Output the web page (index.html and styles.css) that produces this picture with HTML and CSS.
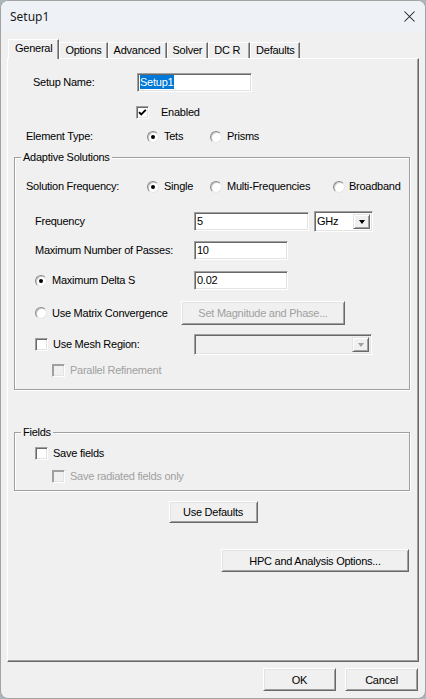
FILE: index.html
```html
<!DOCTYPE html>
<html lang="en">
<head>
    <meta charset="UTF-8">
    <meta name="viewport" content="width=device-width, initial-scale=1.0">
    <title>Setup1</title>
    <link rel="stylesheet" href="styles.css">
</head>
<body>
    <div class="window">
        <div class="titlebar">
            <span class="title">Setup1</span>
            <svg class="close" width="11" height="11" viewBox="0 0 11 11">
                <path d="M0.5 0.5 L10.5 10.5 M10.5 0.5 L0.5 10.5" stroke="#1c1c1c" stroke-width="1.05" fill="none"/>
            </svg>
        </div>

        <div class="content">
            <div class="tabs">
                <div class="tab active">General</div>
                <div class="tab">Options</div>
                <div class="tab">Advanced</div>
                <div class="tab">Solver</div>
                <div class="tab tab-dcr">DC R</div>
                <div class="tab">Defaults</div>
            </div>

            <div class="panel">
                <div class="row name-row">
                    <span>Setup Name:</span>
                    <div class="field name-field"><span class="selection">Setup1</span></div>
                </div>

                <div class="row enabled-row">
                    <span class="check checked">
                        <svg width="13" height="13" viewBox="0 0 13 13"><path d="M3 6.2 L5.2 8.5 L9.8 3.8" stroke="#000" stroke-width="1.9" fill="none"/></svg>
                    </span>
                    <span>Enabled</span>
                </div>

                <div class="row choice-row element-row">
                    <span>Element Type:</span>
                    <label class="option"><span class="radio on"></span>Tets</label>
                    <label class="option"><span class="radio"></span>Prisms</label>
                </div>

                <fieldset class="group adaptive">
                    <legend>Adaptive Solutions</legend>

                    <div class="row choice-row freq-choice">
                        <span>Solution Frequency:</span>
                        <label class="option"><span class="radio on"></span>Single</label>
                        <label class="option"><span class="radio"></span>Multi-Frequencies</label>
                        <label class="option broadband"><span class="radio"></span>Broadband</label>
                    </div>

                    <div class="row input-row freq-row">
                        <span>Frequency</span>
                        <div class="field freq-field">5</div>
                        <div class="field combo">
                            <span class="combo-text">GHz</span>
                            <span class="combo-btn"><span class="arrow"></span></span>
                        </div>
                    </div>

                    <div class="row input-row passes-row">
                        <span>Maximum Number of Passes:</span>
                        <div class="field short-field">10</div>
                    </div>

                    <div class="row input-row delta-row">
                        <label class="option"><span class="radio on"></span>Maximum Delta S</label>
                        <div class="field short-field">0.02</div>
                    </div>

                    <div class="row matrix-row">
                        <label class="option"><span class="radio"></span>Use Matrix Convergence</label>
                        <button class="btn magnitude-btn" disabled>Set Magnitude and Phase...</button>
                    </div>

                    <div class="row input-row mesh-row">
                        <label class="option"><span class="check"></span>Use Mesh Region:</label>
                        <div class="field combo disabled mesh-combo">
                            <span class="combo-text"></span>
                            <span class="combo-btn"><span class="arrow"></span></span>
                        </div>
                    </div>

                    <div class="row sub-row parallel-row">
                        <label class="option disabled"><span class="check"></span>Parallel Refinement</label>
                    </div>
                </fieldset>

                <fieldset class="group fields">
                    <legend>Fields</legend>

                    <div class="row save-row">
                        <label class="option"><span class="check"></span>Save fields</label>
                    </div>

                    <div class="row sub-row radiated-row">
                        <label class="option disabled"><span class="check"></span>Save radiated fields only</label>
                    </div>
                </fieldset>

                <div class="defaults-row">
                    <button class="btn defaults-btn">Use Defaults</button>
                </div>

                <div class="hpc-row">
                    <button class="btn hpc-btn">HPC and Analysis Options...</button>
                </div>
            </div>

            <div class="dialog-buttons">
                <button class="btn dialog-btn">OK</button>
                <button class="btn dialog-btn">Cancel</button>
            </div>
        </div>
    </div>
</body>
</html>
```

FILE: styles.css
```css
* {
    box-sizing: border-box;
}
html, body {
    margin: 0;
}
body {
    background-color: #aab6bb;
    font-family: "Liberation Sans", Arial, sans-serif;
    font-size: 11px;
    letter-spacing: -0.25px;
    color: #000;
}
.window {
    width: 426px;
    height: 699px;
    background-color: #f0f0f0;
    border: 1px solid #a3a3a3;
    border-radius: 8px;
    overflow: hidden;
}

/* title bar */
.titlebar {
    height: 31px;
    background-color: #eef2f6;
    display: flex;
    align-items: center;
    justify-content: space-between;
    padding: 0 10px 0 9px;
}
.title {
    font-family: "Noto Sans", "Open Sans", sans-serif;
    font-size: 12px;
    letter-spacing: 0;
    color: #1a1a1a;
}

.content {
    padding: 7px 6px 0 6px;
}

/* tabs */
.tabs {
    display: flex;
    align-items: flex-end;
    height: 19px;
    padding-left: 1px;
}
.tab {
    height: 16px;
    line-height: 15px;
    padding: 0 5px;
    border-top: 1px solid #fff;
    border-left: 1px solid #fff;
    border-right: 1px solid #696969;
    box-shadow: inset -1px 0 0 #a0a0a0;
}
.tab-dcr {
    padding-right: 9px;
}
.tab.active {
    height: 20px;
    line-height: 17px;
    margin-bottom: -1px;
    padding: 0 6px;
    background-color: #f0f0f0;
    position: relative;
    z-index: 1;
}

/* tab page */
.panel {
    height: 604px;
    border: 1px solid;
    border-color: #fff #696969 #696969 #fff;
    box-shadow: inset -1px -1px 0 #a0a0a0;
}

.row {
    display: flex;
    align-items: center;
    height: 13px;
    line-height: 13px;
    white-space: nowrap;
}
.name-row {
    display: grid;
    grid-template-columns: 104px 115px;
    height: 19px;
    margin-top: 14px;
    padding-left: 25px;
}
.enabled-row {
    margin-top: 14px;
    padding-left: 128px;
    gap: 12px;
}
.choice-row {
    display: grid;
    grid-template-columns: 121px 63px auto;
}
.element-row {
    margin-top: 11px;
    padding-left: 18px;
}

.option {
    display: flex;
    align-items: center;
    gap: 5px;
}
.option.disabled {
    color: #a0a0a0;
}

/* classic radio button */
.radio {
    width: 12px;
    height: 12px;
    flex: none;
    border-radius: 50%;
    background-color: #fff;
    border: 1px solid;
    border-color: #8a8a8a #e6e6e6 #e6e6e6 #8a8a8a;
    box-shadow: inset 1px 1px 0 #c8c8c8;
    display: flex;
    align-items: center;
    justify-content: center;
}
.radio.on::after {
    content: "";
    width: 4px;
    height: 4px;
    border-radius: 50%;
    background-color: #000;
}

/* classic check box */
.check {
    width: 13px;
    height: 13px;
    flex: none;
    background-color: #fff;
    border: 1px solid;
    border-color: #a0a0a0 #fff #fff #a0a0a0;
    box-shadow: inset 1px 1px 0 #696969, inset -1px -1px 0 #e3e3e3;
    position: relative;
}
.check svg {
    position: absolute;
    top: -1px;
    left: -1px;
}
.option.disabled .check {
    background-color: #f0f0f0;
    box-shadow: inset 1px 1px 0 #a0a0a0, inset -1px -1px 0 #e3e3e3;
}

/* sunken edit fields */
.field {
    height: 19px;
    line-height: 16px;
    padding: 0 2px;
    background-color: #fff;
    border: 1px solid;
    border-color: #a0a0a0 #fff #fff #a0a0a0;
    box-shadow: inset 1px 1px 0 #696969, inset -1px -1px 0 #e3e3e3;
}
.selection {
    display: inline-block;
    line-height: 14px;
    margin-top: 1px;
    padding-right: 1px;
    background-color: #0078d7;
    color: #fff;
}

/* group boxes */
.group {
    margin: 8px 8px 0 6px;
    padding: 0 0 12px;
    border: 1px solid #a0a0a0;
    box-shadow: inset 1px 1px 0 #fff, 1px 1px 0 #fff;
    min-width: 0;
}
.group legend {
    margin-left: 6px;
    padding: 0 2px;
    line-height: 13px;
    background-color: #f0f0f0;
}

.freq-choice {
    margin-top: 16px;
    padding-left: 11px;
    grid-template-columns: 121px 63px 123px auto;
}
.broadband {
    gap: 4px;
}

.input-row {
    display: grid;
    grid-template-columns: 159px auto auto;
    padding-left: 20px;
    height: 19px;
    justify-content: start;
}
.freq-row {
    margin-top: 18px;
    height: 21px;
}
.freq-field {
    width: 115px;
}
.short-field {
    width: 94px;
}
.passes-row {
    margin-top: 9px;
}
.delta-row {
    margin-top: 11px;
}

/* combo boxes */
.combo {
    display: flex;
    justify-content: space-between;
    height: 21px;
    margin-left: 5px;
    width: 59px;
    padding: 2px 2px 2px 2px;
    line-height: 15px;
}
.combo-btn {
    width: 17px;
    height: 15px;
    background-color: #f0f0f0;
    border: 1px solid;
    border-color: #e3e3e3 #696969 #696969 #e3e3e3;
    box-shadow: inset 1px 1px 0 #fff, inset -1px -1px 0 #a0a0a0;
    display: flex;
    align-items: center;
    justify-content: center;
}
.arrow {
    width: 0;
    height: 0;
    border-left: 3.5px solid transparent;
    border-right: 3.5px solid transparent;
    border-top: 4px solid #000;
    margin-top: 1px;
}
.combo.disabled {
    background-color: #f0f0f0;
}
.combo.disabled .arrow {
    border-top-color: #a0a0a0;
}
.mesh-combo {
    width: 178px;
    margin-left: 0;
}

/* push buttons */
.btn {
    font-family: inherit;
    font-size: 11px;
    letter-spacing: -0.25px;
    color: #000;
    background-color: #f0f0f0;
    border: 1px solid;
    border-color: #fff #696969 #696969 #fff;
    box-shadow: inset 1px 1px 0 #e3e3e3, inset -1px -1px 0 #a0a0a0;
    padding: 0;
    height: 23px;
}
.btn:disabled {
    color: #a0a0a0;
}

.matrix-row {
    display: grid;
    grid-template-columns: 146px auto;
    justify-content: start;
    padding-left: 20px;
    height: 24px;
    margin-top: 11px;
}
.magnitude-btn {
    width: 164px;
    height: 24px;
}

.mesh-row {
    margin-top: 9px;
    height: 21px;
}
.sub-row {
    padding-left: 37px;
}
.parallel-row {
    margin-top: 9px;
}

.fields {
    margin-top: 36px;
    padding-bottom: 7px;
}
.save-row {
    margin-top: 8px;
    padding-left: 20px;
}
.radiated-row {
    margin-top: 10px;
}

.defaults-row {
    display: flex;
    justify-content: center;
    margin-top: 10px;
}
.defaults-btn {
    width: 89px;
    height: 22px;
}
.hpc-row {
    display: flex;
    justify-content: flex-end;
    margin-top: 26px;
    padding-right: 9px;
}
.hpc-btn {
    width: 188px;
}

/* OK / Cancel */
.dialog-buttons {
    display: flex;
    justify-content: flex-end;
    gap: 9px;
    margin-top: 6px;
    padding-right: 1px;
}
.dialog-btn {
    width: 73px;
}
```
